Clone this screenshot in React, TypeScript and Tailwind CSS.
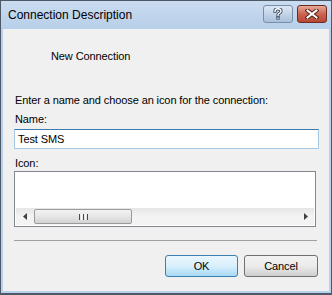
import React from "react";

const FONT = { fontFamily: '"Liberation Sans", Arial, sans-serif' };

function HelpGlyph() {
  return (
    <svg width="10" height="12" viewBox="0 0 10 12">
      <path
        d="M2 3.2 C2 1.4 3.4 0.8 5 0.8 C6.8 0.8 8 1.8 8 3.2 C8 4.6 6.6 5 5.6 5.8 C5.1 6.2 5 6.6 5 7.6"
        fill="none"
        stroke="#3a4a60"
        strokeWidth="3.2"
        strokeLinecap="square"
      />
      <rect x="3.4" y="8.6" width="3.2" height="3" fill="#3a4a60" />
      <path
        d="M2 3.2 C2 1.4 3.4 0.8 5 0.8 C6.8 0.8 8 1.8 8 3.2 C8 4.6 6.6 5 5.6 5.8 C5.1 6.2 5 6.6 5 7.6"
        fill="none"
        stroke="#ffffff"
        strokeWidth="1.4"
        strokeLinecap="square"
      />
      <rect x="4.3" y="9.5" width="1.4" height="1.3" fill="#ffffff" />
    </svg>
  );
}

function CloseGlyph() {
  return (
    <svg width="14" height="10" viewBox="0 0 14 10">
      <path d="M2.5 1.5 L11.5 8.5 M11.5 1.5 L2.5 8.5" stroke="#4a1f18" strokeWidth="4" strokeLinecap="square" />
      <path d="M2.5 1.5 L11.5 8.5 M11.5 1.5 L2.5 8.5" stroke="#ffffff" strokeWidth="2" strokeLinecap="square" />
    </svg>
  );
}

function ArrowLeft() {
  return (
    <svg width="4" height="7" viewBox="0 0 4 7">
      <path d="M4 0 L0 3.5 L4 7 Z" fill="#404040" />
    </svg>
  );
}

function ArrowRight() {
  return (
    <svg width="4" height="7" viewBox="0 0 4 7">
      <path d="M0 0 L4 3.5 L0 7 Z" fill="#404040" />
    </svg>
  );
}

export default function App() {
  return (
    <div
      className="flex h-[295px] w-[332px] flex-col border border-b-2 border-[#4d5966] bg-[#b9d1ea]"
      style={FONT}
    >
      {/* Title bar */}
      <div className="flex h-[28px] shrink-0 items-start bg-gradient-to-b from-[#cadcf0] to-[#b7cfe9] pl-[7px] pr-[4px]">
        <span className="mt-[7px] text-[12px] leading-[15px] text-[#000000]">Connection Description</span>
        <div className="ml-auto mt-[4px] flex gap-[4px]">
          <div className="flex h-[18px] w-[30px] items-center justify-center rounded-[3px] border border-[#7a8ea8] bg-gradient-to-b from-[#dce7f4] via-[#c3d4e8] to-[#a9c0db]">
            <HelpGlyph />
          </div>
          <div className="flex h-[18px] w-[30px] items-center justify-center rounded-[3px] border border-[#6b2d22] bg-gradient-to-b from-[#e6a896] via-[#cc6452] to-[#b84735]">
            <CloseGlyph />
          </div>
        </div>
      </div>

      {/* Client area */}
      <div className="mx-[2px] mb-[2px] flex flex-1 flex-col bg-[#f0f0f0] pl-[11px] pr-[10px] text-[11px] leading-[13px] tracking-[-0.1px] text-black">
        <div className="ml-[37px] mt-[21px]">New Connection</div>
        <div className="ml-px mt-[31px]">Enter a name and choose an icon for the connection:</div>
        <div className="ml-px mt-[6px]">Name:</div>
        <div className="mt-[3px] flex h-[20px] items-center border border-[#a5c8e4] border-t-[#3d7bad] bg-white pl-[3px]">
          Test SMS
        </div>
        <div className="ml-px mt-[8px]">Icon:</div>
        <div className="mr-[3px] mt-px flex h-[56px] flex-col justify-end border border-[#828790] bg-white p-px">
          {/* Horizontal scrollbar */}
          <div className="flex h-[17px] items-stretch bg-gradient-to-b from-[#e6e6e6] via-[#f3f3f3] to-[#f3f3f3]">
            <div className="flex w-[17px] items-center justify-center">
              <ArrowLeft />
            </div>
            <div className="my-px ml-px flex w-[98px] items-center justify-center rounded-[2px] border border-[#9a9a9a] bg-gradient-to-b from-[#f3f3f3] via-[#e6e6e6] to-[#d3d3d3]">
              <div className="flex gap-[1px]">
                <span className="h-[6px] w-px bg-[#4b4b4b]" />
                <span className="h-[6px] w-px bg-white" />
                <span className="h-[6px] w-px bg-[#4b4b4b]" />
                <span className="h-[6px] w-px bg-white" />
                <span className="h-[6px] w-px bg-[#4b4b4b]" />
              </div>
            </div>
            <div className="flex-1" />
            <div className="flex w-[17px] items-center justify-center">
              <ArrowRight />
            </div>
          </div>
        </div>

        <div className="mr-[2px] mt-[13px] h-px bg-[#a0a0a0]" />

        <div className="mr-px mt-[14px] flex justify-end gap-[6px]">
          <div className="flex h-[22px] w-[73px] items-center justify-center rounded-[3px] border border-[#3c7fb1] bg-gradient-to-b from-[#eaf6fd] via-[#d9f0fc] to-[#a7d9f5]">
            OK
          </div>
          <div className="flex h-[22px] w-[74px] items-center justify-center rounded-[3px] border border-[#707070] bg-gradient-to-b from-[#f2f2f2] via-[#ebebeb] to-[#cfcfcf]">
            Cancel
          </div>
        </div>
      </div>
    </div>
  );
}
